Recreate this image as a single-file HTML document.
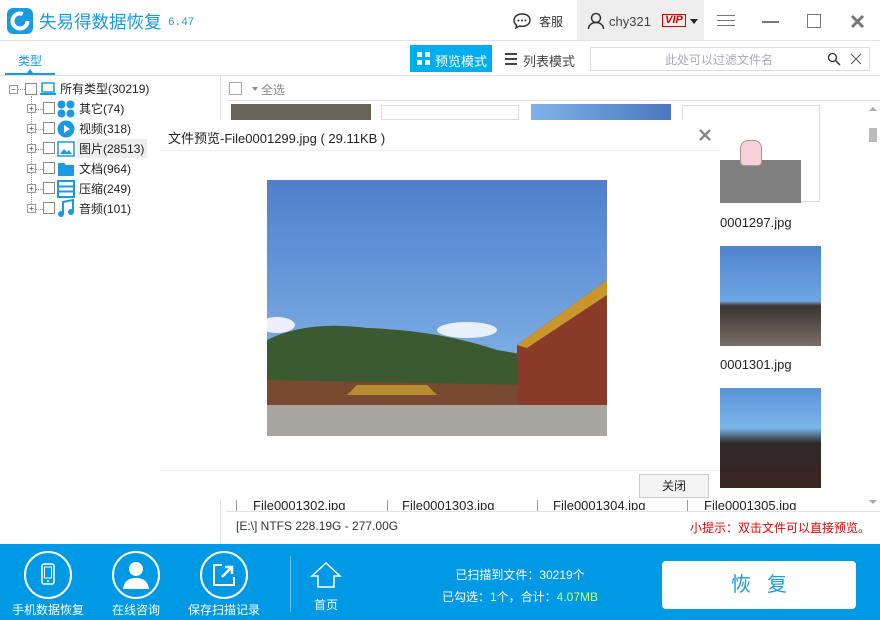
<!DOCTYPE html>
<html><head><meta charset="utf-8"><style>
*{margin:0;padding:0;box-sizing:border-box}
body{width:880px;height:620px;position:relative;overflow:hidden;background:#fff;font-family:"Liberation Sans","Noto Sans CJK SC",sans-serif;font-size:12px;color:#333}
.abs{position:absolute}
.hl{position:absolute;background:#e3e3e3}
.t{position:absolute;height:20px;line-height:20px;font-size:12px;color:#222}
.cb{position:absolute;width:12px;height:12px;border:1px solid #888;background:#fff}
.pm{position:absolute;width:9px;height:9px;border:1px solid #999;font-size:8px;line-height:7px;text-align:center;color:#333;background:#fff}
.dl{position:absolute;height:1px;border-top:1px dotted #999}
.fn{position:absolute;font-size:13px;color:#222}
.bt{position:absolute;color:#fff;font-size:12px;text-align:center}
.circ{position:absolute;width:48px;height:48px;border:2px solid #fff;border-radius:50%}
</style></head><body>
<!-- title bar -->
<div class="abs" style="left:7px;top:8px;width:26px;height:26px;background:#1a9ae0;border-radius:6px"></div>
<svg class="abs" style="left:7px;top:8px" width="26" height="26"><circle cx="13" cy="13" r="7.5" fill="none" stroke="#fff" stroke-width="4" stroke-dasharray="38 10"/></svg>
<div class="abs" style="left:39px;top:9px;font-size:17.5px;color:#1a9ae0">失易得数据恢复</div>
<div class="abs" style="left:168px;top:17px;font-size:11px;color:#1a9ae0;font-family:'Liberation Mono',monospace">6.47</div>
<svg class="abs" style="left:512px;top:12px" width="20" height="18"><path d="M10 2C5 2 2 5 2 8.5c0 2 1 3.5 2.5 4.5L4 16l3.5-2c1 .3 1.7.4 2.5.4 5 0 8-3 8-6.4S15 2 10 2z" fill="none" stroke="#333" stroke-width="1.5"/><circle cx="6.5" cy="8.5" r="1" fill="#333"/><circle cx="10" cy="8.5" r="1" fill="#333"/><circle cx="13.5" cy="8.5" r="1" fill="#333"/></svg>
<div class="abs" style="left:539px;top:13px;font-size:12px;color:#333">客服</div>
<div class="abs" style="left:577px;top:0;width:127px;height:40px;background:#eeeeee"></div>
<svg class="abs" style="left:587px;top:12px" width="18" height="18"><circle cx="9" cy="6" r="4.5" fill="none" stroke="#333" stroke-width="1.5"/><path d="M1.5 17c0-4 3.5-6.5 7.5-6.5s7.5 2.5 7.5 6.5" fill="none" stroke="#333" stroke-width="1.5"/></svg>
<div class="abs" style="left:609px;top:14px;font-size:13px;color:#444">chy321</div>
<div class="abs" style="left:662px;top:14px;width:24px;height:13px;border:1px solid #d00;color:#d00;font-size:11px;font-weight:bold;font-style:italic;line-height:11px;text-align:center">VIP</div>
<div class="abs" style="left:690px;top:19px;border-left:4px solid transparent;border-right:4px solid transparent;border-top:5px solid #222"></div>
<div class="abs" style="left:717px;top:15px;width:18px;height:1px;background:#777;box-shadow:0 5px 0 #777,0 10px 0 #777"></div>
<div class="abs" style="left:762px;top:21px;width:17px;height:2px;background:#777"></div>
<div class="abs" style="left:807px;top:14px;width:14px;height:14px;border:1px solid #777"></div>
<svg class="abs" style="left:850px;top:14px" width="15" height="15"><path d="M2 2L13 13M13 2L2 13" stroke="#777" stroke-width="3"/></svg>
<div class="hl" style="left:0;top:40px;width:880px;height:1px"></div>
<!-- toolbar -->
<div class="abs" style="left:18px;top:52px;font-size:12px;color:#1a9ae0">类型</div>
<div class="abs" style="left:5px;top:73px;width:50px;height:2px;background:#1a9ae0"></div>
<div class="abs" style="left:27px;top:69px;border-left:3px solid transparent;border-right:3px solid transparent;border-bottom:4px solid #1a9ae0"></div>
<div class="hl" style="left:0;top:75px;width:880px;height:1px"></div>
<div class="abs" style="left:410px;top:45px;width:82px;height:27px;background:#00aef0"></div>
<div class="abs" style="left:417px;top:52px;width:13px;height:13px;background:linear-gradient(#fff 0 0) 0 0/5px 5px no-repeat,linear-gradient(#fff 0 0) 8px 0/5px 5px no-repeat,linear-gradient(#fff 0 0) 0 8px/5px 5px no-repeat,linear-gradient(#fff 0 0) 8px 8px/5px 5px no-repeat"></div>
<div class="abs" style="left:435px;top:51px;font-size:13px;color:#fff">预览模式</div>
<div class="abs" style="left:505px;top:53px;width:12px;height:2px;background:#444;box-shadow:0 5px 0 #444,0 10px 0 #444"></div>
<div class="abs" style="left:523px;top:51px;font-size:13px;color:#444">列表模式</div>
<div class="abs" style="left:590px;top:47px;width:280px;height:24px;border:1px solid #ddd"></div>
<div class="abs" style="left:665px;top:51px;font-size:12px;color:#aab">此处可以过滤文件名</div>
<svg class="abs" style="left:827px;top:52px" width="14" height="14"><circle cx="5.5" cy="5.5" r="4" fill="none" stroke="#333" stroke-width="1.3"/><path d="M8.5 8.5L13 13" stroke="#333" stroke-width="1.5"/></svg>
<svg class="abs" style="left:850px;top:53px" width="12" height="12"><path d="M1 1L11 11M11 1L1 11" stroke="#555" stroke-width="1"/></svg>
<!-- tree -->
<div class="hl" style="left:220px;top:76px;width:1px;height:470px"></div>
<div class="abs" style="left:13px;top:94px;width:1px;height:0"></div>
<div class="abs" style="left:31px;top:96px;width:0;height:114px;border-left:1px dotted #999"></div>
<div class="dl" style="left:18px;top:89px;width:7px"></div>
<div class="pm" style="left:9px;top:85px">−</div>
<div class="cb" style="left:25px;top:83px"></div>
<svg class="abs" style="left:40px;top:82px" width="16" height="14"><rect x="2" y="1" width="12" height="9" fill="none" stroke="#1a9ae0" stroke-width="1.5"/><rect x="0" y="11" width="16" height="2" fill="#1a9ae0"/></svg>
<div class="t" style="left:60px;top:79px">所有类型(30219)</div>

<div class="dl" style="left:36px;top:109px;width:7px"></div>
<div class="pm" style="left:27px;top:104px">+</div><div class="cb" style="left:43px;top:102px"></div>
<svg class="abs" style="left:57px;top:100px" width="18" height="18"><circle cx="4.5" cy="4.5" r="4" fill="#1a9ae0"/><circle cx="13.5" cy="4.5" r="4" fill="#1a9ae0"/><circle cx="4.5" cy="13.5" r="4" fill="#1a9ae0"/><circle cx="13.5" cy="13.5" r="4" fill="#1a9ae0"/></svg>
<div class="t" style="left:79px;top:99px">其它(74)</div>
<div class="dl" style="left:36px;top:129px;width:7px"></div>
<div class="pm" style="left:27px;top:124px">+</div><div class="cb" style="left:43px;top:122px"></div>
<svg class="abs" style="left:57px;top:120px" width="18" height="18"><circle cx="9" cy="9" r="8.5" fill="#1a9ae0"/><path d="M7 5L13 9L7 13Z" fill="#fff"/></svg>
<div class="t" style="left:79px;top:119px">视频(318)</div>
<div class="abs" style="left:77px;top:139px;width:70px;height:19px;background:#eee"></div>
<div class="dl" style="left:36px;top:149px;width:7px"></div>
<div class="pm" style="left:27px;top:144px">+</div><div class="cb" style="left:43px;top:142px"></div>
<svg class="abs" style="left:57px;top:141px" width="18" height="16"><rect x="1" y="1" width="16" height="14" fill="none" stroke="#1a9ae0" stroke-width="1.5"/><path d="M3 13L7 8L10 11L12 9L15 13Z" fill="#1a9ae0"/></svg>
<div class="t" style="left:79px;top:139px">图片(28513)</div>
<div class="dl" style="left:36px;top:169px;width:7px"></div>
<div class="pm" style="left:27px;top:164px">+</div><div class="cb" style="left:43px;top:162px"></div>
<svg class="abs" style="left:57px;top:161px" width="18" height="16"><path d="M1 2h6l2 2h8v11H1z" fill="#1a9ae0"/></svg>
<div class="t" style="left:79px;top:159px">文档(964)</div>
<div class="dl" style="left:36px;top:189px;width:7px"></div>
<div class="pm" style="left:27px;top:184px">+</div><div class="cb" style="left:43px;top:182px"></div>
<svg class="abs" style="left:57px;top:180px" width="18" height="18"><rect x="1" y="1" width="16" height="16" fill="none" stroke="#1a9ae0" stroke-width="2"/><path d="M1 6.5h16M1 11.5h16" stroke="#1a9ae0" stroke-width="2"/></svg>
<div class="t" style="left:79px;top:179px">压缩(249)</div>
<div class="dl" style="left:36px;top:209px;width:7px"></div>
<div class="pm" style="left:27px;top:204px">+</div><div class="cb" style="left:43px;top:202px"></div>
<svg class="abs" style="left:57px;top:199px" width="18" height="19"><path d="M6 15V3l10-2v12" fill="none" stroke="#1a9ae0" stroke-width="2"/><circle cx="4" cy="15" r="3" fill="#1a9ae0"/><circle cx="14" cy="13" r="3" fill="#1a9ae0"/></svg>
<div class="t" style="left:79px;top:199px">音频(101)</div>
<!-- grid header -->
<div class="cb" style="left:229px;top:82px;width:13px;height:13px;border-color:#aaa"></div>
<div class="abs" style="left:252px;top:87px;border-left:3px solid transparent;border-right:3px solid transparent;border-top:4px solid #888"></div>
<div class="abs" style="left:261px;top:81px;color:#888;font-size:12px">全选</div>
<div class="hl" style="left:226px;top:100px;width:654px;height:1px"></div>
<div class="abs" style="left:231px;top:104px;width:140px;height:16px;background:#6b6258"></div>
<div class="abs" style="left:381px;top:105px;width:138px;height:15px;border:1px solid #ddd"></div>
<div class="abs" style="left:531px;top:104px;width:140px;height:16px;background:linear-gradient(90deg,#7fb3e8,#4b78bd)"></div>
<div class="abs" style="left:682px;top:105px;width:138px;height:97px;border:1px solid #ddd"></div>
<div class="abs" style="left:720px;top:160px;width:81px;height:43px;background:#808080"></div>
<div class="abs" style="left:740px;top:140px;width:22px;height:26px;background:#f6d0d8;border-radius:8px 8px 4px 4px;border:1px solid #a98"></div>
<div class="fn" style="left:720px;top:215px">0001297.jpg</div>
<div class="abs" style="left:720px;top:246px;width:101px;height:100px;background:linear-gradient(#4f83cc 0,#6ea5e2 55%,#3a3430 60%,#7a6f66 100%)"></div>
<div class="fn" style="left:720px;top:357px">0001301.jpg</div>
<div class="abs" style="left:720px;top:388px;width:101px;height:100px;background:linear-gradient(#5a92d6 0,#7ab6ea 40%,#2e2a28 55%,#3a2420 100%)"></div>
<!-- scrollbar -->
<div class="abs" style="left:869px;top:107px;border-left:4px solid transparent;border-right:4px solid transparent;border-bottom:4px solid #aaa"></div>
<div class="abs" style="left:869px;top:128px;width:8px;height:14px;background:#bbb"></div>
<div class="abs" style="left:869px;top:500px;border-left:4px solid transparent;border-right:4px solid transparent;border-top:4px solid #aaa"></div>
<!-- file row -->
<div class="abs" style="left:236px;top:499px;width:1px;height:12px;background:#999"></div>
<div class="fn" style="left:253px;top:498px;height:12px;overflow:hidden">File0001302.jpg</div>
<div class="abs" style="left:387px;top:499px;width:1px;height:12px;background:#999"></div>
<div class="fn" style="left:402px;top:498px;height:12px;overflow:hidden">File0001303.jpg</div>
<div class="abs" style="left:537px;top:499px;width:1px;height:12px;background:#999"></div>
<div class="fn" style="left:553px;top:498px;height:12px;overflow:hidden">File0001304.jpg</div>
<div class="abs" style="left:687px;top:499px;width:1px;height:12px;background:#999"></div>
<div class="fn" style="left:704px;top:498px;height:12px;overflow:hidden">File0001305.jpg</div>
<div class="hl" style="left:226px;top:511px;width:654px;height:1px"></div>
<div class="abs" style="left:236px;top:519px;font-size:12px;color:#333">[E:\] NTFS 228.19G - 277.00G</div>
<div class="abs" style="left:690px;top:519px;font-size:12px;color:#e00">小提示：双击文件可以直接预览。</div>
<!-- dialog -->
<div class="abs" style="left:160px;top:120px;width:560px;height:380px;background:#fff"></div>
<div class="abs" style="left:168px;top:128px;font-size:13px;color:#222">文件预览-File0001299.jpg ( 29.11KB )</div>
<svg class="abs" style="left:699px;top:129px" width="12" height="12"><path d="M1 1L11 11M11 1L1 11" stroke="#888" stroke-width="2.5"/></svg>
<div class="abs" style="left:160px;top:150px;width:560px;height:1px;background:#eee"></div>
<svg class="abs" style="left:267px;top:180px" width="340" height="256">
<defs><linearGradient id="sk" x1="0" y1="0" x2="0" y2="1"><stop offset="0" stop-color="#4f7fcb"/><stop offset="1" stop-color="#8fc0ee"/></linearGradient></defs>
<rect width="340" height="256" fill="url(#sk)"/>
<ellipse cx="200" cy="150" rx="30" ry="8" fill="#e8f0fa"/><ellipse cx="120" cy="155" rx="20" ry="6" fill="#e8f0fa"/><ellipse cx="10" cy="145" rx="18" ry="8" fill="#eef"/>
<path d="M0 160 Q40 140 100 148 Q170 150 230 170 L260 175 L260 256 L0 256Z" fill="#3c5a32"/>
<path d="M0 200 L260 205 L260 256 L0 256Z" fill="#7a4a30"/>
<path d="M340 100 L250 165 L250 256 L340 256Z" fill="#8a3a28"/>
<path d="M340 100 L250 165 L260 168 L340 115Z" fill="#c9962e"/>
<path d="M90 205 L160 205 L170 215 L80 215Z" fill="#b88c30"/>
<rect x="0" y="225" width="340" height="31" fill="#a9a6a0"/>
</svg>
<div class="abs" style="left:160px;top:470px;width:560px;height:1px;background:#eee"></div>
<div class="abs" style="left:639px;top:474px;width:70px;height:24px;border:1px solid #ccc;background:#f4f4f4;text-align:center;line-height:22px;font-size:12px;color:#222">关闭</div>
<!-- bottom bar -->
<div class="abs" style="left:0;top:544px;width:880px;height:76px;background:#0099e5"></div>
<div class="circ" style="left:24px;top:551px"></div>
<svg class="abs" style="left:40px;top:563px" width="16" height="24"><rect x="2" y="1" width="12" height="20" rx="2" fill="none" stroke="#fff" stroke-width="1.5"/><rect x="4.5" y="4" width="7" height="11" fill="none" stroke="#fff"/><circle cx="8" cy="18" r="1" fill="#fff"/></svg>
<div class="bt" style="left:6px;top:601px;width:84px">手机数据恢复</div>
<div class="circ" style="left:112px;top:551px"></div>
<svg class="abs" style="left:118px;top:557px" width="36" height="36"><circle cx="18" cy="12" r="7" fill="#fff"/><path d="M5 32c1-8 6-11 13-11s12 3 13 11z" fill="#fff"/></svg>
<div class="bt" style="left:100px;top:601px;width:72px">在线咨询</div>
<div class="circ" style="left:200px;top:551px"></div>
<svg class="abs" style="left:212px;top:563px" width="24" height="24"><path d="M10 2H2v20h20v-8" fill="none" stroke="#fff" stroke-width="2"/><path d="M10 14L20 4M13 4h7v7" fill="none" stroke="#fff" stroke-width="2.5"/></svg>
<div class="bt" style="left:184px;top:601px;width:80px">保存扫描记录</div>
<div class="abs" style="left:290px;top:556px;width:1px;height:56px;background:#6cc0ee"></div>
<svg class="abs" style="left:310px;top:561px" width="32" height="28"><path d="M16 2L30 15H24V26H8V15H2Z" fill="none" stroke="#fff" stroke-width="1.5"/></svg>
<div class="bt" style="left:306px;top:596px;width:40px">首页</div>
<div class="bt" style="left:420px;top:566px;width:200px">已扫描到文件：30219个</div>
<div class="bt" style="left:420px;top:588px;width:200px">已勾选：<span style="color:#ff0">1</span>个，合计：<span style="color:#cf6">4.07MB</span></div>
<div class="abs" style="left:662px;top:561px;width:194px;height:48px;background:#fff;border-radius:4px;text-align:center;line-height:48px;font-size:20px;color:#1a9ae0;letter-spacing:16px;padding-left:16px">恢复</div>
</body></html>
